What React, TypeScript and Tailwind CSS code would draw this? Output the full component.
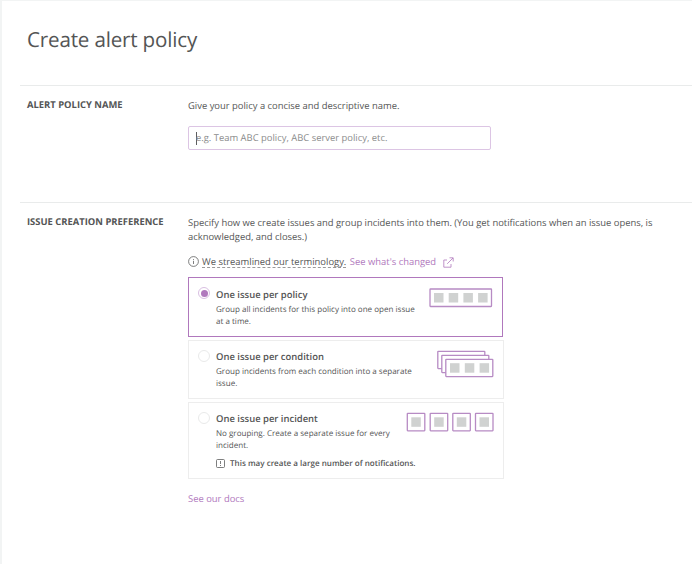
import type { ReactNode } from "react";

function Radio({ checked = false }: { checked?: boolean }) {
  return (
    <span
      className={
        "flex h-[12px] w-[12px] shrink-0 items-center justify-center rounded-full border " +
        (checked ? "-mt-px border-[#d9bfe2]" : "border-[#e9eaea]")
      }
    >
      {checked && <span className="h-[7px] w-[7px] rounded-full bg-[#b078bd]" />}
    </span>
  );
}

function Option({
  title,
  lines,
  checked,
  box,
  drawing,
  children,
}: {
  title: string;
  lines: string[];
  checked?: boolean;
  box: string;
  drawing: ReactNode;
  children?: ReactNode;
}) {
  return (
    <div className={"flex justify-between " + box}>
      <div className="flex w-[180px]">
        <Radio checked={checked} />
        <div className="ml-[6px] shrink-0 whitespace-nowrap">
          <div className="text-[9.45px] leading-[14px] font-semibold">{title}</div>
          <div className="mt-[2px] text-[8.05px] leading-[12px]">
            {lines.map((line) => (
              <div key={line}>{line}</div>
            ))}
          </div>
          {children}
        </div>
      </div>
      {drawing}
    </div>
  );
}

function PolicyDrawing() {
  return (
    <svg className="block" width="64" height="20" viewBox="0 0 64 20">
      <rect x="1" y="1" width="61.5" height="17.5" rx=".5" fill="#fff" stroke="#b78bc4" strokeWidth="1.3" />
      {[5, 19.7, 34.4, 49.1].map((x) => (
        <rect key={x} x={x} y="5" width="9.5" height="9.5" fill="#d0d2d1" />
      ))}
    </svg>
  );
}

function ConditionDrawing() {
  return (
    <svg className="block" width="58" height="28" viewBox="0 0 58 28">
      <g fill="#fff" stroke="#b78bc4" strokeWidth="1.3">
        <rect x="1.8" y="1.3" width="47" height="17.3" rx=".5" />
        <rect x="5.8" y="5.3" width="47" height="17.3" rx=".5" />
        <rect x="9.8" y="9.3" width="47" height="17.3" rx=".5" />
      </g>
      {[14, 28.8, 43.6].map((x) => (
        <rect key={x} x={x} y="13.2" width="9.5" height="9.5" fill="#d0d2d1" />
      ))}
    </svg>
  );
}

function IncidentDrawing() {
  return (
    <svg className="block" width="88" height="20" viewBox="0 0 88 20">
      {[0.3, 23.2, 45.8, 68.5].map((x) => (
        <g key={x}>
          <rect x={x + 1} y="1.3" width="17.5" height="17.5" rx=".5" fill="#fff" stroke="#b78bc4" strokeWidth="1.3" />
          <rect x={x + 5} y="5.3" width="9.5" height="9.5" fill="#d0d2d1" />
        </g>
      ))}
    </svg>
  );
}

export default function App() {
  return (
    <div className="h-[564px] w-[692px] overflow-hidden border-t border-l-2 border-[#f2f4f4] bg-white font-['Open_Sans',sans-serif] text-[9.42px] text-[#545555] [text-rendering:geometricPrecision]">
      <h1 className="h-[84px] pt-[25px] pl-[25px] text-[20.6px] leading-[28px] font-normal tracking-[-0.18px]">Create alert policy</h1>

      <section className="ml-[18px] flex h-[117px] border-t border-[#e9ebeb] pl-[7px]">
        <h2 className="w-[161px] shrink-0 pt-3 text-[9.42px] leading-[14px] font-bold whitespace-nowrap">ALERT POLICY NAME</h2>
        <div className="pt-[13px]">
          <p className="leading-[14px]">Give your policy a concise and descriptive name.</p>
          <div className="mt-[13px] flex h-[24px] w-[303px] items-center rounded-[2px] border border-[#dcc5e4] pl-[7px] text-[#8b8c8c]">
            <span className="-mr-px h-[13px] w-px bg-[#5d5e5e]" />
            <span>e.g. Team ABC policy, ABC server policy, etc.</span>
          </div>
        </div>
      </section>

      <section className="ml-[18px] flex border-t border-[#e9ebeb] pl-[7px]">
        <h2 className="w-[161px] shrink-0 pt-3 text-[9.42px] leading-[14px] font-bold whitespace-nowrap">ISSUE CREATION PREFERENCE</h2>
        <div className="pt-[13px] whitespace-nowrap">
          <p className="leading-[13.5px]">
            Specify how we create issues and group incidents into them. (You get notifications when an issue opens, is
            <br />
            acknowledged, and closes.)
          </p>
          <div className="mt-3 flex h-[14px] items-center leading-[12px]">
            <svg className="-mt-px mr-[3px]" width="11" height="11" viewBox="0 0 11 11" fill="none" stroke="#5d5e5e" strokeWidth=".8">
              <circle cx="5.5" cy="5.5" r="4.9" />
              <path d="M5.5 4.8v3.2M5.5 3v.9" />
            </svg>
            <span className="border-b border-dashed border-[#999] leading-[11px]">We streamlined our terminology.</span>
            <span className="-mt-px ml-[3.5px] text-[#b078bd]">See what's changed</span>
            <svg className="mt-px ml-[7px]" width="11" height="11" viewBox="0 0 11 11" fill="none" stroke="#b078bd" strokeWidth=".8">
              <path d="M4 3H.8v7.2H8V7M6.5.8h3.7v3.7M10 1 4.2 6.8" />
            </svg>
          </div>

          <div className="mt-[8px] flex w-[316px] flex-col">
            <Option
              title="One issue per policy"
              lines={["Group all incidents for this policy into one open issue", "at a time."]}
              checked
              box="mr-px h-[60px] border-[1.5px] border-[#b078bd] pt-[10px] pr-[9px] pl-[9px]"
              drawing={<PolicyDrawing />}
            />
            <Option
              title="One issue per condition"
              lines={["Group incidents from each condition into a separate", "issue."]}
              box="mt-[3px] h-[59px] border border-[#ededed] pt-[9px] pr-[9px] pl-[9px]"
              drawing={<ConditionDrawing />}
            />
            <Option
              title="One issue per incident"
              lines={["No grouping. Create a separate issue for every", "incident."]}
              box="mt-[3px] h-[77px] border border-[#ededed] pt-[9px] pr-[9px] pl-[9px]"
              drawing={<IncidentDrawing />}
            >
              <div className="mt-[6px] flex items-center text-[8.05px] leading-[12px] font-semibold">
                <svg className="-mt-px mr-[5px]" width="9" height="9" viewBox="0 0 9 9" fill="none" stroke="#5d5e5e" strokeWidth=".8">
                  <rect x=".5" y=".5" width="8" height="8" rx="1" />
                  <path d="M4.5 2v3M4.5 6v1" />
                </svg>
                This may create a large number of notifications.
              </div>
            </Option>
          </div>
          <div className="mt-[13px] leading-[14px] text-[#b078bd]">See our docs</div>
        </div>
      </section>
    </div>
  );
}
